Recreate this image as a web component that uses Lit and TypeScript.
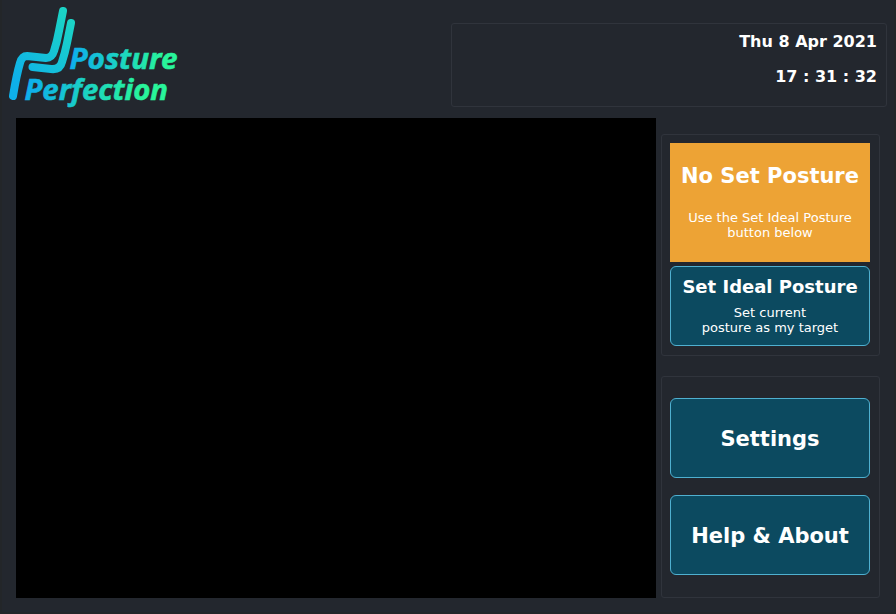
import { LitElement, html, css } from "lit";
import { customElement } from "lit/decorators.js";

@customElement("posture-logo")
class PostureLogo extends LitElement {
  static styles = css`
    :host { display: block; width: 180px; height: 112px; margin-left: -2px; }
    svg { display: block; }
    .word { font: italic 700 29px "Noto Sans", sans-serif; stroke-width: 0.6; }
    .top { fill: url(#top); stroke: url(#top); }
    .bottom { fill: url(#bottom); stroke: url(#bottom); }
    .seat { fill: none; stroke: url(#seat); stroke-width: 8; stroke-linecap: round; stroke-linejoin: round; }
  `;
  render() {
    return html`<svg width="180" height="112" viewBox="0 0 180 112">
      <defs>
        <linearGradient id="seat" gradientUnits="userSpaceOnUse" x1="14" y1="80" x2="72" y2="22">
          <stop offset="0" stop-color="#0eb0ea" /><stop offset="1" stop-color="#1bd3c6" />
        </linearGradient>
        <linearGradient id="top" gradientUnits="userSpaceOnUse" x1="74" y1="0" x2="164" y2="0">
          <stop offset="0" stop-color="#0eb0ea" /><stop offset="1" stop-color="#28f59a" />
        </linearGradient>
        <linearGradient id="bottom" gradientUnits="userSpaceOnUse" x1="32" y1="0" x2="142" y2="0">
          <stop offset="0" stop-color="#0eb0ea" /><stop offset="1" stop-color="#28f59a" />
        </linearGradient>
      </defs>
      <path class="seat" d="M13 96 C15 84 17 73 20 63 Q22 56 27 56 L46 58 Q52 58 54 51 Q57 42 59 31 L63 11" />
      <path class="seat" d="M32.500 67 L51 69 Q60 70 62 62 Q65 53 67 43 L71 23" />
      <text class="word top" x="69.500" y="69" textLength="108" lengthAdjust="spacingAndGlyphs">Posture</text>
      <text class="word bottom" x="24.500" y="100" textLength="143.500" lengthAdjust="spacingAndGlyphs">Perfection</text>
    </svg>`;
  }
}

@customElement("app-root")
class AppRoot extends LitElement {
  static styles = css`
    :host {
      display: block; box-sizing: border-box; width: 896px; height: 614px; overflow: hidden;
      background: #23272e; border: solid #232629; border-width: 0 2px 2px;
      color: #fff; font-family: "DejaVu Sans", sans-serif;
    }
    * { box-sizing: border-box; }
    header { display: flex; justify-content: space-between; height: 118px; padding-right: 7px; }
    .panel { border: 1px solid #30343c; border-radius: 3px; }
    .clock {
      width: 436px; height: 84px; margin-top: 23px; padding: 8px 9px 0 0;
      text-align: right; font-weight: bold; font-size: 16px; line-height: 19px;
    }
    .time { margin-top: 16px; }
    main { display: flex; gap: 5px; padding-left: 14px; }
    .camera { width: 640px; height: 480px; background: #000; }
    .side { width: 219px; padding-top: 16px; display: flex; flex-direction: column; gap: 20px; }
    .status { height: 222px; padding: 8px; display: flex; flex-direction: column; gap: 4px; }
    .menu { height: 222px; padding: 21px 8px 0; display: flex; flex-direction: column; gap: 17px; }
    .notice { width: 200px; height: 119px; background: #eda335; text-align: center; padding-top: 21px; }
    .title { font-weight: bold; font-size: 21px; line-height: 25px; white-space: nowrap; }
    .notice .title { margin-bottom: 21px; }
    .note { font-size: 13px; line-height: 15px; }
    button {
      width: 200px; height: 80px; flex: none; padding: 2px 0 0; border: 1px solid #4fb0d0; border-radius: 6px;
      background: #0c4a60; color: #fff; font-family: inherit; text-align: center;
      display: flex; flex-direction: column; align-items: center; justify-content: center;
    }
    .ideal { justify-content: flex-start; padding-top: 9px; }
    .ideal .title { font-size: 18px; line-height: 21px; margin-bottom: 8px; }
  `;
  render() {
    return html`
      <header>
        <posture-logo></posture-logo>
        <div class="panel clock">
          <div>Thu 8 Apr 2021</div>
          <div class="time">17 : 31 : 32</div>
        </div>
      </header>
      <main>
        <div class="camera"></div>
        <div class="side">
          <section class="panel status">
            <div class="notice">
              <div class="title">No Set Posture</div>
              <div class="note">Use the Set Ideal Posture<br />button below</div>
            </div>
            <button class="ideal">
              <span class="title">Set Ideal Posture</span>
              <span class="note">Set current<br />posture as my target</span>
            </button>
          </section>
          <section class="panel menu">
            <button><span class="title">Settings</span></button>
            <button><span class="title">Help &amp; About</span></button>
          </section>
        </div>
      </main>
    `;
  }
}
